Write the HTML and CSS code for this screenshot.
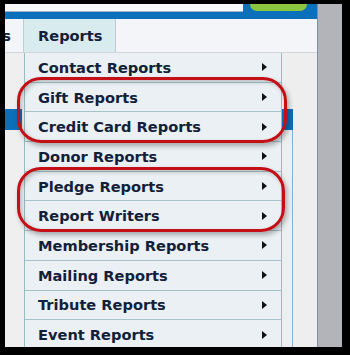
FILE: index.html
```html
<!DOCTYPE html>
<html lang="en">
<head>
  <meta charset="UTF-8">
  <title>Reports Menu</title>
  <link rel="stylesheet" href="styles.css">
</head>
<body>
  <div class="frame">
    <div class="app">
      <div class="header">
        <div class="search"></div>
        <div class="go"></div>
      </div>
      <div class="nav">
        <div class="tab prev">s</div>
        <div class="tab active">Reports</div>
      </div>
      <div class="content">
        <div class="gutter"><div class="sel"></div></div>
        <ul class="menu">
          <li>Contact Reports</li>
          <li>Gift Reports</li>
          <li>Credit Card Reports</li>
          <li>Donor Reports</li>
          <li>Pledge Reports</li>
          <li>Report Writers</li>
          <li>Membership Reports</li>
          <li>Mailing Reports</li>
          <li>Tribute Reports</li>
          <li>Event Reports</li>
        </ul>
        <div class="rest">
          <div class="sel"></div>
          <div class="rule"></div>
        </div>
      </div>
    </div>
    <div class="side"></div>

    <!-- callouts drawn over the menu -->
    <div class="callout first"></div>
    <div class="callout second"></div>
  </div>
</body>
</html>
```

FILE: styles.css
```css
body {
  margin: 0;
  background: #000;
  font-family: 'DejaVu Sans', Verdana, sans-serif;
}

.frame {
  position: relative;
  display: flex;
  width: 337px;
  height: 343px;
  margin: 4px 8px 8px 5px;
  background: #eeeeee;
  overflow: hidden;
}

.app {
  display: flex;
  flex-direction: column;
  width: 312px;
}

.header {
  display: flex;
  flex-shrink: 0;
  align-items: flex-start;
  height: 15px;
  background: #0b6fba;
}

.search {
  width: 238px;
  height: 7px;
  background: #f7f8fa;
  border-bottom: 1px solid #9fb4c8;
}

.go {
  width: 57px;
  height: 7px;
  margin-left: 7px;
  background: #8cc63e;
  border-radius: 0 0 8px 8px;
}

.nav {
  display: flex;
  flex-shrink: 0;
  height: 33px;
  background: #f3f5f8;
  border-bottom: 1px solid #d2d6da;
}

.tab {
  display: flex;
  align-items: center;
  font-size: 14.6px;
  font-weight: bold;
  color: #13203a;
}

.tab.prev {
  width: 18px;
  justify-content: flex-end;
  padding-right: 12px;
  box-sizing: border-box;
  overflow: hidden;
}

.tab.active {
  width: 77px;
  padding-left: 14px;
  background: #d8ebef;
  border-left: 1px solid #c3cbd0;
  border-right: 1px solid #c3cbd0;
}

.content {
  display: flex;
  flex: 1;
  min-height: 0;
}

.gutter {
  width: 19px;
  background: #efefef;
}

.sel {
  height: 21px;
  margin-top: 56px;
  background: #0d6fb8;
}

.gutter .sel {
  width: 17px;
}

.menu {
  list-style: none;
  margin: 0;
  padding: 0;
  width: 256px;
  background: #eaf0f3;
  border-left: 1px solid #94bcc4;
  border-right: 1px solid #94bcc4;
}

.menu li {
  display: flex;
  align-items: center;
  box-sizing: border-box;
  height: 29.7px;
  padding: 0 14px 0 13px;
  border-bottom: 1px solid #a4c4ca;
  font-size: 14.6px;
  font-weight: bold;
  color: #13203a;
  white-space: nowrap;
}

.menu li::after {
  content: "";
  margin-left: auto;
  border-left: 5px solid #111;
  border-top: 4px solid transparent;
  border-bottom: 4px solid transparent;
}

.rest {
  display: flex;
  flex-direction: column;
  flex: 1;
}

.rest .sel {
  width: 11px;
}

.rest .rule {
  flex: 1;
  width: 10px;
  border-right: 1px solid #7fb1da;
}

.side {
  flex: 1;
  background: #b3b4b9;
  border-left: 1px solid #7f8fa2;
}

.callout {
  position: absolute;
  box-sizing: border-box;
  border: 3px solid #c40f16;
  border-radius: 24px;
  box-shadow: 2px 3px 5px rgba(0, 0, 0, 0.3), inset 2px 2px 4px rgba(0, 0, 0, 0.22);
}

.callout.first {
  left: 12px;
  top: 73px;
  width: 270px;
  height: 66px;
}

.callout.second {
  left: 12px;
  top: 163px;
  width: 268px;
  height: 65px;
}
```
